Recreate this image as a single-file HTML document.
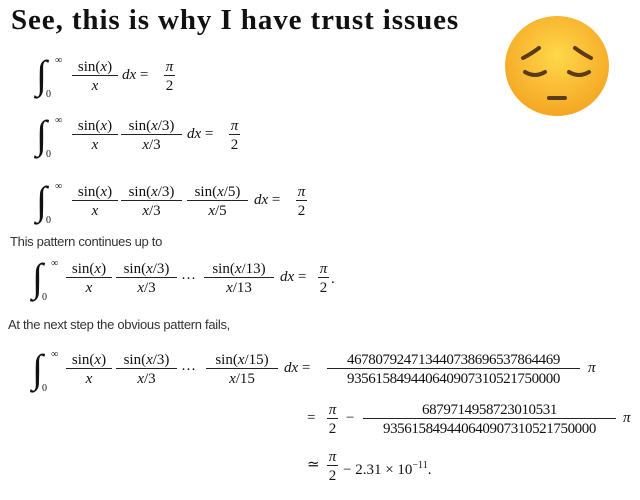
<!DOCTYPE html>
<html><head><meta charset="utf-8"><style>
body{margin:0;width:640px;height:500px;background:#fff;position:relative;overflow:hidden;font-family:"Liberation Serif",serif;color:#111}
.a{position:absolute;white-space:nowrap}
.t{position:absolute;left:11px;top:4px;font-size:29px;font-weight:bold;letter-spacing:0.9px;white-space:nowrap}
.s{font-family:"Liberation Sans",sans-serif;font-size:13px;color:#333;letter-spacing:-0.3px}
.f{position:absolute;border-top:1.2px solid #222;height:0;font-size:15px;line-height:15px}
.f .n,.f .d{position:absolute;left:-10px;right:-10px;text-align:center}
.f .n{bottom:1px}.f .d{top:3px}
.m{position:absolute;font-size:15px;line-height:15px;white-space:nowrap}
.int{position:absolute;font-size:40px;line-height:40px;font-style:italic}
.sm{position:absolute;font-size:10px;line-height:10px}
i{font-style:italic}
</style></head><body>
<div class="t">See, this is why I have trust issues</div>
<svg class="a" style="left:503px;top:14px" width="108" height="104" viewBox="0 0 108 104">
<defs><radialGradient id="g" cx="50%" cy="40%" r="60%"><stop offset="0" stop-color="#ffd84a"/><stop offset="1" stop-color="#f5a623"/></radialGradient></defs>
<ellipse cx="54" cy="52" rx="52" ry="50" fill="url(#g)"/>
<path d="M20 44 Q28 40 36 34" stroke="#5a3a1a" stroke-width="4" fill="none" stroke-linecap="round"/>
<path d="M88 44 Q80 40 72 34" stroke="#5a3a1a" stroke-width="4" fill="none" stroke-linecap="round"/>
<path d="M22 58 Q32 64 42 58" stroke="#5a3a1a" stroke-width="4" fill="none" stroke-linecap="round"/>
<path d="M66 58 Q76 64 86 58" stroke="#5a3a1a" stroke-width="4" fill="none" stroke-linecap="round"/>
<path d="M46 84 L62 84" stroke="#5a3a1a" stroke-width="4" stroke-linecap="round"/>
</svg>

<!-- eq1 -->
<div class="int" style="left:36px;top:55px">∫</div><div class="sm" style="left:55px;top:56px">∞</div><div class="sm" style="left:46px;top:90px">0</div>
<div class="f" style="left:72px;top:75px;width:46px"><div class="n">sin(<i>x</i>)</div><div class="d"><i>x</i></div></div>
<div class="m" style="left:122px;top:68px"><i>dx</i> =</div>
<div class="f" style="left:164px;top:75px;width:11px"><div class="n"><i>π</i></div><div class="d">2</div></div>

<!-- eq2 -->
<div class="int" style="left:36px;top:115px">∫</div><div class="sm" style="left:55px;top:116px">∞</div><div class="sm" style="left:46px;top:150px">0</div>
<div class="f" style="left:72px;top:134px;width:46px"><div class="n">sin(<i>x</i>)</div><div class="d"><i>x</i></div></div>
<div class="f" style="left:121px;top:134px;width:61px"><div class="n">sin(<i>x</i>/3)</div><div class="d"><i>x</i>/3</div></div>
<div class="m" style="left:187px;top:127px"><i>dx</i> =</div>
<div class="f" style="left:229px;top:134px;width:11px"><div class="n"><i>π</i></div><div class="d">2</div></div>

<!-- eq3 -->
<div class="int" style="left:36px;top:181px">∫</div><div class="sm" style="left:55px;top:182px">∞</div><div class="sm" style="left:46px;top:216px">0</div>
<div class="f" style="left:72px;top:200px;width:46px"><div class="n">sin(<i>x</i>)</div><div class="d"><i>x</i></div></div>
<div class="f" style="left:121px;top:200px;width:61px"><div class="n">sin(<i>x</i>/3)</div><div class="d"><i>x</i>/3</div></div>
<div class="f" style="left:187px;top:200px;width:61px"><div class="n">sin(<i>x</i>/5)</div><div class="d"><i>x</i>/5</div></div>
<div class="m" style="left:254px;top:193px"><i>dx</i> =</div>
<div class="f" style="left:296px;top:200px;width:11px"><div class="n"><i>π</i></div><div class="d">2</div></div>

<div class="a s" style="left:10px;top:234px">This pattern continues up to</div>

<!-- eq4 -->
<div class="int" style="left:32px;top:258px">∫</div><div class="sm" style="left:51px;top:259px">∞</div><div class="sm" style="left:42px;top:293px">0</div>
<div class="f" style="left:66px;top:277px;width:46px"><div class="n">sin(<i>x</i>)</div><div class="d"><i>x</i></div></div>
<div class="f" style="left:116px;top:277px;width:61px"><div class="n">sin(<i>x</i>/3)</div><div class="d"><i>x</i>/3</div></div>
<div class="m" style="left:181px;top:272px">···</div>
<div class="f" style="left:204px;top:277px;width:70px"><div class="n">sin(<i>x</i>/13)</div><div class="d"><i>x</i>/13</div></div>
<div class="m" style="left:280px;top:270px"><i>dx</i> =</div>
<div class="f" style="left:318px;top:277px;width:11px"><div class="n"><i>π</i></div><div class="d">2</div></div>
<div class="m" style="left:331px;top:272px">.</div>

<div class="a s" style="left:8px;top:317px">At the next step the obvious pattern fails,</div>

<!-- eq5 -->
<div class="int" style="left:32px;top:349px">∫</div><div class="sm" style="left:51px;top:350px">∞</div><div class="sm" style="left:42px;top:384px">0</div>
<div class="f" style="left:66px;top:368px;width:46px"><div class="n">sin(<i>x</i>)</div><div class="d"><i>x</i></div></div>
<div class="f" style="left:116px;top:368px;width:61px"><div class="n">sin(<i>x</i>/3)</div><div class="d"><i>x</i>/3</div></div>
<div class="m" style="left:181px;top:363px">···</div>
<div class="f" style="left:206px;top:368px;width:72px"><div class="n">sin(<i>x</i>/15)</div><div class="d"><i>x</i>/15</div></div>
<div class="m" style="left:284px;top:361px"><i>dx</i> =</div>
<div class="f" style="left:327px;top:368px;width:253px;letter-spacing:-0.4px"><div class="n">467807924713440738696537864469</div><div class="d">935615849440640907310521750000</div></div>
<div class="m" style="left:588px;top:361px"><i>π</i></div>

<!-- eq6 -->
<div class="m" style="left:307px;top:411px">=</div>
<div class="f" style="left:327px;top:418px;width:11px"><div class="n"><i>π</i></div><div class="d">2</div></div>
<div class="m" style="left:346px;top:411px">−</div>
<div class="f" style="left:363px;top:418px;width:253px;letter-spacing:-0.4px"><div class="n">6879714958723010531</div><div class="d">935615849440640907310521750000</div></div>
<div class="m" style="left:623px;top:411px"><i>π</i></div>

<!-- eq7 -->
<div class="m" style="left:307px;top:458px">≃</div>
<div class="f" style="left:327px;top:465px;width:11px"><div class="n"><i>π</i></div><div class="d">2</div></div>
<div class="m" style="left:343px;top:458px">− 2.31 × 10<sup style="font-size:10px">−11</sup>.</div>
</body></html>
